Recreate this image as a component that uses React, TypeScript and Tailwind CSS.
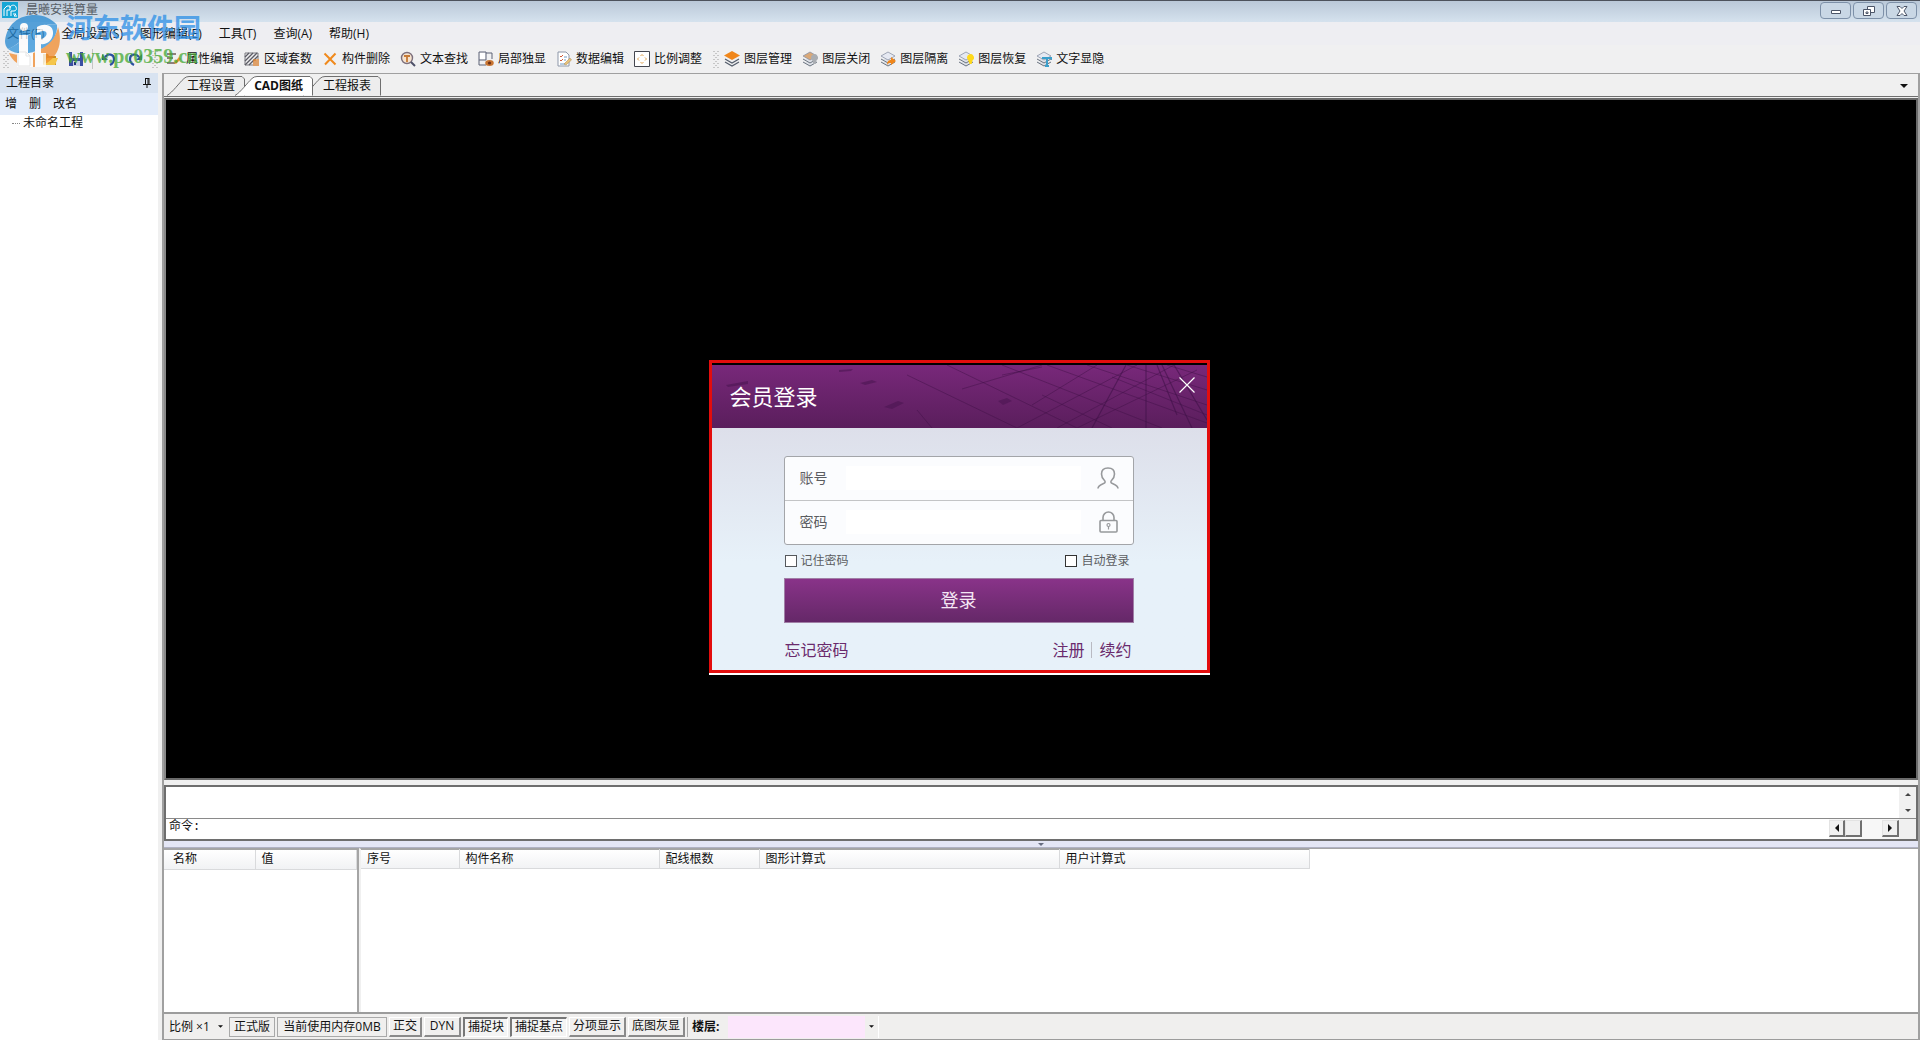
import { useState } from "react";
import type { ReactNode } from "react";

const menus = ["文件(F)", "全局设置(S)", "图形编辑(E)", "工具(T)", "查询(A)", "帮助(H)"];

const detailColumns = [
  { title: "序号", width: "w-[98px]" },
  { title: "构件名称", width: "w-[200px]" },
  { title: "配线根数", width: "w-[100px]" },
  { title: "图形计算式", width: "w-[300px]" },
  { title: "用户计算式", width: "w-[250px]" },
];

function Icon({ children }: { children: ReactNode }) {
  return (
    <svg className="h-4 w-4 shrink-0" viewBox="0 0 16 16" fill="none">
      {children}
    </svg>
  );
}

/* Stacked sheets shared by all the layer commands */
function Sheets({ top = "#e6e9f2" }: { top?: string }) {
  return (
    <>
      <path d="M1 11l7 4 7-4" fill="#dfe2e8" stroke="#6b7480" />
      <path d="M1 8l7 4 7-4" fill="#dfe2e8" stroke="#6b7480" />
      <path d="M8 1L1 5l7 4 7-4z" fill={top} stroke="#8a93a6" strokeWidth=".8" />
    </>
  );
}

const editTools = [
  {
    label: "属性编辑",
    icon: (
      <>
        <path d="M1 3h9M1 7h6M1 12h8" stroke="#6d5a55" strokeWidth="1.5" />
        <path d="M8 12l5-6 2 2-5 5z" fill="#e9922f" />
      </>
    ),
  },
  {
    label: "区域套数",
    icon: (
      <>
        <path d="M1 2h13v6M1 2v12h8" stroke="#7a7a80" />
        <path d="M1 6l4-4M1 10l8-8M1 14L13 2M5 14l9-9" stroke="#5d5d66" strokeWidth="1.3" />
        <path d="M10 15V9h2v6M14 15V8" stroke="#d98538" strokeWidth="1.5" />
      </>
    ),
  },
  { label: "构件删除", icon: <path d="M2.500 2.500l11 11M13.500 2.500L3 13.500" stroke="#f08a1d" strokeWidth="2" /> },
  {
    label: "文本查找",
    icon: (
      <>
        <circle cx="7" cy="7" r="5.5" fill="#f6e3cf" stroke="#7c6f7c" strokeWidth="1.4" />
        <path d="M4 5h6M7 5v6" stroke="#c67a36" strokeWidth="1.8" />
        <path d="M11 11l4 4" stroke="#4c5068" strokeWidth="2" />
      </>
    ),
  },
  {
    label: "局部独显",
    icon: (
      <>
        <path d="M1 1h7v8H1zM1 9v5h7M8 2h6v6" stroke="#5c6377" />
        <path d="M2 2h5v6H2z" fill="#fff" />
        <ellipse cx="11.5" cy="12" rx="4.3" ry="3" fill="#c87532" />
        <circle cx="11.5" cy="12" r="1.6" fill="#6b2f16" />
      </>
    ),
  },
  {
    label: "数据编辑",
    icon: (
      <>
        <path d="M2 1h8l3 3v11H2z" fill="#fff" stroke="#8d97a8" />
        <path d="M4 5l1 1 2-2M4 9l1 1 2-2" stroke="#d05c39" />
        <path d="M8 6h3M8 9h2M4 13h5" stroke="#6e9ac4" />
        <path d="M8 13l6-6 1.5 2L10 14z" fill="#e8c27a" stroke="#a98950" strokeWidth=".5" />
      </>
    ),
  },
  {
    label: "比例调整",
    icon: (
      <>
        <path d="M.5.5h15v15H.5z" fill="#fff" stroke="#44464f" />
        <path d="M6.500 5L8 3.500 9.500 5M6.500 11L8 12.500 9.500 11M5 6.500L3.500 8 5 9.500M11 6.500L12.500 8 11 9.500" stroke="#dfa24e" />
      </>
    ),
  },
];

const layerTools = [
  {
    label: "图层管理",
    icon: (
      <>
        <path d="M1 11l7 4 7-4M1 8l7 4 7-4" stroke="#555e6c" strokeWidth="1.2" />
        <path d="M8 0L0 4.500l8 4.500 8-4.500z" fill="#f0861a" />
      </>
    ),
  },
  {
    label: "图层关闭",
    icon: (
      <>
        <Sheets top="#d9a878" />
        <path d="M9 7a3.500 3.500 0 1 1 5.500 2.500L13.500 13h-2l-1-3z" fill="#a9adb2" />
      </>
    ),
  },
  {
    label: "图层隔离",
    icon: (
      <>
        <Sheets />
        <path d="M7 14c0-4 2-5 4-5V6l5 4-5 4v-2c-2 0-3 0-4 2z" fill="#f0861a" />
      </>
    ),
  },
  {
    label: "图层恢复",
    icon: (
      <>
        <Sheets />
        <path d="M9 7a3.500 3.500 0 1 1 5.500 2.500L13.500 13h-2l-1-3z" fill="#ffd91a" />
      </>
    ),
  },
  {
    label: "文字显隐",
    icon: (
      <>
        <Sheets />
        <path d="M6 7h10v2M11 7v8M9 15h4" stroke="#3b9fcb" strokeWidth="2" />
      </>
    ),
  },
];

function ToolButton({ label, icon }: { label: string; icon: ReactNode }) {
  return (
    <button className="mr-2.5 flex items-center gap-1 whitespace-nowrap">
      <Icon>{icon}</Icon>
      {label}
    </button>
  );
}

function Grip() {
  return (
    <svg className="h-5 w-2 shrink-0" viewBox="0 0 8 20" fill="none">
      <path d="M2 2v18M6 2v18" stroke="#9c9c9c" strokeDasharray="1 3" />
      <path d="M4 4v16" stroke="#9c9c9c" strokeDasharray="1 3" />
    </svg>
  );
}

function Arrow({ className }: { className: string }) {
  return (
    <svg className={className} viewBox="0 0 8 4">
      <path d="M0 0h8L4 4z" fill="currentColor" />
    </svg>
  );
}

function TitleBar() {
  const box =
    "flex h-[17px] w-[31px] items-center justify-center rounded-sm border border-[#7d90a8] bg-[#c9d7e5]";
  return (
    <header className="flex h-[22px] shrink-0 items-start justify-between border-t border-[#4d525c] bg-linear-to-b from-[#bac8d8] to-[#d5e2ee]">
      <div className="flex items-center gap-2 pl-0.5 pt-px text-[#555c64]">
        <svg className="h-4 w-4" viewBox="0 0 16 16" fill="none">
          <path d="M0 0h16v16H0z" fill="#17a6d6" />
          <path d="M2 14V7l3-3h3v4H5v6M8 6c0-3 5-4 6-1 1 2 0 4-2 4H9M9 9v5M11 12h3l-2 2h3" stroke="#fff" />
        </svg>
        <h1>晨曦安装算量</h1>
      </div>
      <div className="flex gap-0.5 pr-[3px] pt-px">
        <button className={box} aria-label="最小化">
          <svg className="h-3 w-3" viewBox="0 0 12 12">
            <path d="M1.500 5.500h9v3h-9z" fill="#fff" stroke="#4c5568" />
          </svg>
        </button>
        <button className={box} aria-label="还原">
          <svg className="h-3 w-3" viewBox="0 0 12 12">
            <path d="M4.500 1.500h7v6h-7z" fill="#fff" stroke="#4c5568" />
            <path d="M.5 4.500h7v6h-7zM3 7h2v1.500H3z" fill="#fff" stroke="#4c5568" />
          </svg>
        </button>
        <button className={box} aria-label="关闭">
          <svg className="h-3 w-3" viewBox="0 0 12 12">
            <path d="M1 1.500h3l2 2 2-2h3L8 6l3 4.500H8l-2-2-2 2H1L4 6z" fill="#fff" stroke="#4c5568" />
          </svg>
        </button>
      </div>
    </header>
  );
}

function Toolbar() {
  return (
    <div className="flex h-7 shrink-0 items-center bg-[#f0f0f1] pl-0.5">
      <Grip />
      <button className="ml-1.5 mr-2.5" aria-label="新建">
        <Icon>
          <path d="M2 1h8l4 4v10H2z" fill="#fff" stroke="#9a9a9a" />
          <path d="M10 1v4h4" stroke="#9a9a9a" />
        </Icon>
      </button>
      <button className="mr-2.5" aria-label="打开">
        <Icon>
          <path d="M1 14V3h5l1 2h7v9z" fill="#c98f22" />
          <path d="M1 14l4-7h11l-3 7z" fill="#f5c64a" />
        </Icon>
      </button>
      <button className="mr-2" aria-label="保存">
        <Icon>
          <path d="M1 1h14v14H1z" fill="#3b4fa3" />
          <path d="M4 1h8v6H4z" fill="#e9eef9" />
          <path d="M5 10h7v5H5z" fill="#c9d0e6" />
          <path d="M6 11h2v3H6z" fill="#26357a" />
        </Icon>
      </button>
      <span className="mr-2 h-5 w-px bg-[#c5c5c5]" />
      <button className="mr-2.5" aria-label="撤销">
        <Icon>
          <path d="M4 6c3-4 9-3 9 2 0 3-2 5-4 6" stroke="#2a4fa0" strokeWidth="2.200" />
          <path d="M1 3v6h6z" fill="#2a4fa0" />
        </Icon>
      </button>
      <button className="mr-2" aria-label="重做">
        <Icon>
          <path d="M12 6C9 2 3 3 3 8c0 3 2 5 4 6" stroke="#2a4fa0" strokeWidth="2.200" />
          <path d="M15 3v6H9z" fill="#2a4fa0" />
        </Icon>
      </button>
      <Grip />
      <div className="ml-[7px] flex">
        {editTools.map((tool) => (
          <ToolButton key={tool.label} {...tool} />
        ))}
      </div>
      <Grip />
      <div className="ml-1 flex">
        {layerTools.map((tool) => (
          <ToolButton key={tool.label} {...tool} />
        ))}
      </div>
    </div>
  );
}

function ProjectPanel() {
  return (
    <aside className="flex w-[158px] shrink-0 flex-col bg-white">
      <div className="flex h-5 items-center justify-between bg-[#d8e3f1] pl-1.5 pr-[7px]">
        <h2>工程目录</h2>
        <button aria-label="固定">
          <svg className="h-2.5 w-2" viewBox="0 0 8 10" fill="none">
            <path d="M2 .5h4M2.500 0v6M5 0v6M6 0v6M0 6.500h8M4 7v3" stroke="#111" />
          </svg>
        </button>
      </div>
      <div className="flex h-[22px] items-center gap-3 bg-[#e3ecfa] pl-[5px]">
        <button>增</button>
        <button>删</button>
        <button>改名</button>
      </div>
      <ul className="pl-3">
        <li className="flex h-4 items-center gap-[3px]">
          <span className="w-2 border-t border-dotted border-[#888]" />
          未命名工程
        </li>
      </ul>
    </aside>
  );
}

function Tab({ label, active, onSelect }: { label: string; active: boolean; onSelect: () => void }) {
  return (
    <button
      role="tab"
      aria-selected={active}
      onClick={onSelect}
      className={`relative -mr-2.5 flex h-5 w-[78px] items-center justify-end pr-2.5 whitespace-nowrap ${
        active ? "z-20 font-bold" : "z-10"
      }`}
    >
      <svg className="absolute inset-0 h-5 w-[78px]" viewBox="0 0 78 20">
        <path
          d="M0 19.500C6 16 12 7 17 2.500Q19 .5 22 .5h53l2.500 2.500v16.500"
          fill={active ? "#ffffff" : "#ededed"}
          stroke="#6f6f6f"
        />
      </svg>
      <span className="relative">{label}</span>
    </button>
  );
}

function CommandPanel() {
  const key =
    "flex h-[17px] items-center justify-center border-t border-l border-b-2 border-r-2 border-t-[#e3e3e3] border-l-[#e3e3e3] border-b-[#707070] border-r-[#707070] bg-[#f0f0f0]";
  return (
    <section className="mt-[5px] flex h-14 shrink-0 flex-col border-2 border-[#6e6e6e] bg-white">
      <div className="flex min-h-0 flex-1 border-b border-[#8a8a8a]">
        <textarea className="h-full min-w-0 flex-1 resize-none outline-none" aria-label="命令历史" readOnly />
        <div className="flex w-[17px] flex-col items-center justify-around bg-[#f0f0f0] text-[#444]">
          <Arrow className="h-[3px] w-1.5 rotate-180" />
          <Arrow className="h-[3px] w-1.5" />
        </div>
      </div>
      <div className="flex h-5 shrink-0 items-start">
        <label htmlFor="command" className="pl-[3px] font-['Liberation_Mono','Noto_Sans_CJK_SC',monospace] leading-4">
          命令:
        </label>
        <input id="command" className="h-4 min-w-0 flex-1 px-1 outline-none" />
        <div className="flex h-full bg-[#f7f7f7] pt-px">
          <button className={`${key} w-4`} aria-label="向左滚动">
            <Arrow className="h-1 w-2 rotate-90" />
          </button>
          <span className={`${key} w-[17px]`} />
          <button className={`${key} ml-5 w-[17px]`} aria-label="向右滚动">
            <Arrow className="h-1 w-2 -rotate-90" />
          </button>
        </div>
        <span className="h-full w-[17px] bg-[#f0f0f0]" />
      </div>
    </section>
  );
}

function HeaderCell({ title, width }: { title: string; width: string }) {
  return (
    <th className={`${width} h-[19px] border-r border-b border-[#d9dadc] pl-1.5 text-left font-normal`} scope="col">
      {title}
    </th>
  );
}

function DataPanels() {
  return (
    <section className="flex h-[164px] shrink-0">
      <div className="w-[195px] shrink-0 border-t-2 border-r-2 border-[#a5a5a5] bg-white">
        <table className="w-full table-fixed border-collapse">
          <thead className="bg-linear-to-b from-white to-[#f1f2f4]">
            <tr>
              <th className="h-[19px] w-[91px] border-r border-b border-[#d9dadc] pl-[9px] text-left font-normal" scope="col">
                名称
              </th>
              <HeaderCell title="值" width="" />
            </tr>
          </thead>
        </table>
      </div>
      <div className="flex-1 border-t border-l-2 border-[#a5a5a5] border-l-[#f0f0f0] bg-white">
        <table className="w-[948px] table-fixed border-collapse border-t border-[#a5a5a5]">
          <thead className="bg-linear-to-b from-white to-[#f1f2f4]">
            <tr>
              {detailColumns.map((column) => (
                <HeaderCell key={column.title} {...column} />
              ))}
            </tr>
          </thead>
        </table>
      </div>
    </section>
  );
}

function StatusBar() {
  const flat = "flex h-5 items-center border border-[#a9a9a9] px-1";
  const raised =
    "flex h-5 items-center border-t border-l border-b-2 border-r-2 border-t-white border-l-white border-b-[#8a8a8a] border-r-[#8a8a8a] px-[3px]";
  const pressed =
    "flex h-5 items-center border-t-2 border-l-2 border-b border-r border-t-[#777] border-l-[#777] border-b-white border-r-white bg-[#f4f4f4] px-[3px]";
  return (
    <footer className="flex h-7 shrink-0 items-center gap-0.5 whitespace-nowrap border-t-2 border-b border-[#9c9c9c] bg-[#f0efee] pl-[5px]">
      <button className="flex w-[58px] items-center justify-between pr-1">
        比例 ×1
        <Arrow className="h-[3px] w-[5px]" />
      </button>
      <span className={flat}>正式版</span>
      <span className={`${flat} w-[110px] justify-center`}>当前使用内存0MB</span>
      <button className={raised}>正交</button>
      <button className={`${raised} w-[37px] justify-center`}>DYN</button>
      <button className={pressed} aria-pressed="true">
        捕捉块
      </button>
      <button className={pressed} aria-pressed="true">
        捕捉基点
      </button>
      <button className={raised}>分项显示</button>
      <button className={raised}>底图灰显</button>
      <span className="h-5 border-l border-[#a9a9a9]" />
      <label htmlFor="floor" className="px-0.5 font-bold">
        楼层:
      </label>
      <div className="ml-1 flex h-[22px] items-center border-r border-white">
        <select id="floor" className="h-[22px] w-[137px] appearance-none bg-[#fce6fc] outline-none" />
        <Arrow className="mx-1 h-[3px] w-[5px]" />
      </div>
    </footer>
  );
}

function LoginDialog({ onClose }: { onClose: () => void }) {
  const field = "flex items-center pl-[15px] pr-3.5";
  return (
    <div className="absolute inset-0 z-30 flex items-center justify-center pb-2 pr-0.5">
      <div
        role="dialog"
        aria-labelledby="login-title"
        className="w-[501px] border-[3px] border-[#e30d0d] bg-black pt-0.5 shadow-[0_2px_0_#fff]"
      >
        <div className="relative flex h-[63px] items-center overflow-hidden bg-linear-to-b from-[#78287a] to-[#5a1e5c] pl-[18px]">
          <svg className="absolute inset-0 h-full w-full" viewBox="0 0 495 63" preserveAspectRatio="none" fill="none">
            <g stroke="#3d1046" strokeOpacity=".55" strokeWidth=".8">
              <path d="M195 10l110 53M235 0l130 63M290 0l160 63M335 0l160 58M375 0l120 40M415 0l80 25M455 0l40 12" />
              <path d="M305 63L425 0M345 63L462 0M250 24L330 0M365 63L485 5M290 10L330 2M320 40L385 0" />
              <path d="M380 63L414 0M434 63V0M465 50L445 0M495 55L462 0M480 63L450 0" strokeWidth="1.200" />
              <path d="M205 45l15 18M400 12l95 38M330 30l70 33" />
            </g>
            <g fill="#4b1552" fillOpacity=".6">
              <path d="M172 42l14-6 6 2-12 6zM148 18l12-3 5 2-12 3zM286 36l9-3 5 3-9 4zM127 5l14-1-2 2-12 1zM14 20l22-4v3l-20 3z" />
            </g>
          </svg>
          <h2 id="login-title" className="relative text-[22px] leading-7 text-white">
            会员登录
          </h2>
          <button className="absolute right-3 top-3" aria-label="关闭" onClick={onClose}>
            <svg className="h-4 w-4" viewBox="0 0 16 16">
              <path d="M.5.5l15 15M15.500.5l-15 15" stroke="#fff" strokeWidth="1.200" />
            </svg>
          </button>
        </div>

        <form
          className="flex h-[242px] flex-col bg-linear-to-b from-[#dddfea] to-[#e7f1f9] to-55% pl-[72px] pr-[73px] pt-7 text-[#5b5d61]"
          onSubmit={(e) => e.preventDefault()}
        >
          <div className="rounded-[3px] border border-[#a3a5a9] bg-[#fbfcfe] text-sm">
            <div className={`${field} h-11 border-b border-[#c3c4c6]`}>
              <label htmlFor="account">账号</label>
              <input id="account" className="ml-[18px] h-6 min-w-0 flex-1 bg-white outline-none" />
              <svg className="ml-4 h-[22px] w-[22px]" viewBox="0 0 22 22" fill="none">
                <path
                  d="M1 21.500c0-3 3-4 5.500-5 2-.8 2-2 .8-3.200C5.500 11.500 4.500 9.500 4.500 7c0-4 2.500-6 6.500-6s6.500 2 6.500 6c0 2.500-1 4.500-2.800 6.300-1.200 1.200-1.200 2.400.8 3.200 2.500 1 5.500 2 5.500 5"
                  stroke="#97999c"
                  strokeWidth="1.600"
                />
              </svg>
            </div>
            <div className={`${field} h-[43px]`}>
              <label htmlFor="password">密码</label>
              <input id="password" type="password" className="ml-[18px] h-6 min-w-0 flex-1 bg-white outline-none" />
              <svg className="ml-4 h-[22px] w-[22px]" viewBox="0 0 22 22" fill="none" stroke="#97999c" strokeWidth="1.600">
                <rect x="3" y="9.500" width="17" height="11.500" rx="1" />
                <path d="M6 9.500V6.500a5.500 5.500 0 0 1 11 0v3" />
                <circle cx="11.500" cy="14" r="1.500" strokeWidth="1.200" />
                <path d="M11.500 15.500v3" strokeWidth="1.200" />
              </svg>
            </div>
          </div>

          <div className="flex h-[33px] items-center justify-between pl-px pr-1">
            <label className="flex items-center gap-1">
              <input type="checkbox" className="h-3 w-3 appearance-none border border-[#55585c] bg-white checked:bg-[#78287a]" />
              记住密码
            </label>
            <label className="flex items-center gap-1">
              <input type="checkbox" className="h-3 w-3 appearance-none border border-[#333] bg-white checked:bg-[#78287a]" />
              自动登录
            </label>
          </div>

          <button
            type="submit"
            className="h-[45px] border border-[#a07fa6] bg-linear-to-b from-[#893389] to-[#652868] text-lg text-[#f4e6f4]"
          >
            登录
          </button>

          <div className="mt-[15px] flex items-center justify-between pl-px pr-0.5 text-base text-[#6a2a6c]">
            <a href="#forgot">忘记密码</a>
            <div className="flex items-center gap-[7px]">
              <a href="#register">注册</a>
              <span className="h-4 w-px bg-[#b9bac2]" />
              <a href="#renew">续约</a>
            </div>
          </div>
        </form>
      </div>
    </div>
  );
}

function Watermark() {
  return (
    <div className="pointer-events-none absolute left-1 top-3.5 z-40 flex gap-1 opacity-75">
      <svg className="h-[54px] w-[58px]" viewBox="0 0 58 54">
        <path d="M1 27C3 10 15 1 31 1c9 0 17 4 22 10-7-2-15 0-22 5C20 24 12 32 4 35 2 33 1 30 1 27z" fill="#2387d0" />
        <path d="M54 13c7 22-6 40-27 40C16 53 8 47 5 39c13 4 25 2 35-6 8-6 13-13 14-20z" fill="#f08a2c" />
        <path d="M4 35c10-4 18-12 27-19 8-5 16-7 22-5 1 10-6 19-16 24-10 5-24 7-33 0z" fill="#2f93da" />
        <circle cx="20" cy="13" r="4" fill="#fff" />
        <path d="M15 21h9v18h5v14H13V39h2z" fill="#fff" />
        <path d="M33 13c9-5 17-1 16 7-1 8-8 11-12 10v9h5v14H31V21h6v4c6-1 8-8 2-8-2 0-4 1-6 2z" fill="#fff" />
      </svg>
      <div className="font-bold whitespace-nowrap">
        <p className="text-[27px] leading-7 text-[#2c8fe6]">河东软件园</p>
        <p className="pt-1 font-['Liberation_Serif',serif] text-xl leading-5 text-[#45a832]">www.pc0359.cn</p>
      </div>
    </div>
  );
}

export default function App() {
  const [activeTab, setActiveTab] = useState("CAD图纸");
  const [isLoginOpen, setIsLoginOpen] = useState(true);

  return (
    <div className="relative flex h-screen flex-col overflow-hidden bg-[#f0f0f0] font-['Open_Sans','Noto_Sans_CJK_SC',sans-serif] text-xs leading-4 text-[#111]">
      <TitleBar />
      <nav className="flex h-[23px] shrink-0 items-center gap-[17px] bg-[#eeeef2] pl-[7px]">
        {menus.map((menu) => (
          <button key={menu} className="whitespace-nowrap">
            {menu}
          </button>
        ))}
      </nav>
      <Toolbar />

      <div className="flex min-h-0 flex-1">
        <ProjectPanel />
        <main className="ml-1 flex min-w-0 flex-1 flex-col border-t border-r-2 border-l-2 border-[#a0a0a0]">
          <div className="flex h-[23px] shrink-0 items-end justify-between border-b border-[#6f6f6f] pl-[3px]">
            <div role="tablist" className="flex">
              {["工程设置", "CAD图纸", "工程报表"].map((tab) => (
                <Tab key={tab} label={tab} active={tab === activeTab} onSelect={() => setActiveTab(tab)} />
              ))}
            </div>
            <button className="mb-2 mr-2.5" aria-label="窗口列表">
              <Arrow className="h-1 w-2" />
            </button>
          </div>
          <div className="mt-px min-h-0 flex-1 border-2 border-[#6a6a6a] border-l-[#8a8a8a] bg-black" />
          <CommandPanel />
          <div className="flex h-[7px] shrink-0 items-center justify-center border-b border-[#b0b2c4] bg-[#e4e6f5] text-[#666c80]">
            <Arrow className="h-[3px] w-1.5" />
          </div>
          <DataPanels />
          <StatusBar />
        </main>
      </div>

      {isLoginOpen && <LoginDialog onClose={() => setIsLoginOpen(false)} />}
      <Watermark />
    </div>
  );
}
